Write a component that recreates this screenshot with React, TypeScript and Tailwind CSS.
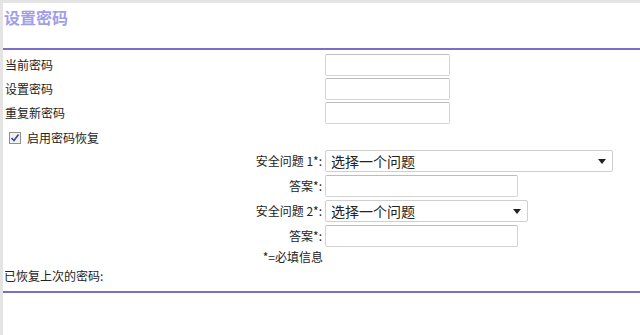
import React from 'react';

const font = { fontFamily: '"Noto Sans CJK SC", "Noto Sans", sans-serif' };

const TextBox = ({ width }: { width: string }) => (
  <div className={`${width} h-[22px] border border-[#d4d4d4] border-t-[#bdbdbd] rounded-[2px] bg-white`} />
);

const Select = ({ width }: { width: string }) => (
  <div
    className={`${width} h-[22px] border border-[#cfcfcf] rounded-[2px] bg-white flex items-center justify-between pl-[5px] pr-[6px] text-[14px] text-[#222]`}
  >
    <span>选择一个问题</span>
    <span className="w-0 h-0 border-l-[4px] border-r-[4px] border-t-[5px] border-l-transparent border-r-transparent border-t-[#222]" />
  </div>
);

const fields = ['当前密码', '设置密码', '重复新密码'];

export default function App() {
  return (
    <div
      className="w-[640px] h-[335px] bg-white border-t-[3px] border-l-[3px] border-[#e4e4e4] text-[12px] text-[#222] overflow-hidden"
      style={font}
    >
      <div className="h-[45px] pl-[1px] pt-[3px]">
        <h1 className="text-[16px] font-bold text-[#a19de8] leading-[22px]">设置密码</h1>
      </div>
      <div className="h-[2px] bg-[#7a6ecb]" />

      <div className="mt-[4px] flex flex-col">
        {fields.map((f) => (
          <div key={f} className="grid grid-cols-[322px_auto] h-[24px] items-start">
            <span className="pl-[2px] leading-[22px]">{f}</span>
            <TextBox width="w-[125px]" />
          </div>
        ))}

        <div className="h-[24px] flex items-center pl-[6px] gap-[6px]">
          <span className="w-[12px] h-[12px] border border-[#8f8f8f] bg-[#f2f2f2] flex items-center justify-center">
            <svg width="10" height="10" viewBox="0 0 10 10">
              <path d="M1.5 5 L4 7.5 L8.5 1.5" fill="none" stroke="#3a4a8c" strokeWidth="1.6" />
            </svg>
          </span>
          <span>启用密码恢复</span>
        </div>

        <div className="grid grid-cols-[322px_auto] items-center gap-y-[3px]">
          <span className="text-right pr-[3px]">安全问题 1*:</span>
          <Select width="w-[288px]" />
          <span className="text-right pr-[3px]">答案*:</span>
          <TextBox width="w-[193px]" />
          <span className="text-right pr-[3px]">安全问题 2*:</span>
          <Select width="w-[203px]" />
          <span className="text-right pr-[3px]">答案*:</span>
          <TextBox width="w-[193px]" />
          <span className="text-right pr-[2px] h-[14px] leading-[14px]">*=必填信息</span>
          <span />
        </div>

        <div className="pl-[1px] h-[24px] leading-[24px]">已恢复上次的密码:</div>
      </div>
      <div className="mt-[3px] h-[2px] bg-[#7a6ecb]" />
    </div>
  );
}
